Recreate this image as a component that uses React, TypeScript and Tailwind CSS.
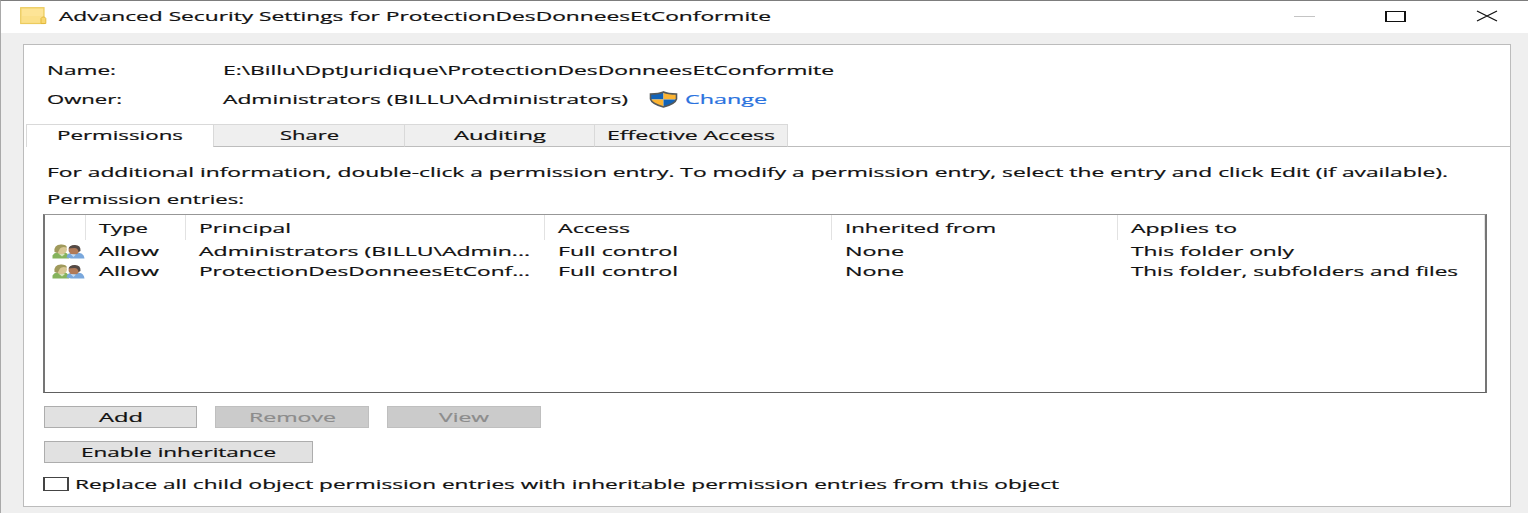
import { useLayoutEffect, useRef } from "react";

/** Single line of text stretched horizontally to fill the width of its box. */
function Wide({ children, className }: { children: string; className: string }) {
  const box = useRef<HTMLSpanElement>(null);
  const text = useRef<HTMLSpanElement>(null);
  useLayoutEffect(() => {
    if (!box.current || !text.current) return;
    const ratio = box.current.offsetWidth / text.current.getBoundingClientRect().width;
    text.current.style.transform = `scaleX(${ratio})`;
  }, []);
  return (
    <span ref={box} className={`block h-[18px] shrink-0 text-left leading-[18px] whitespace-nowrap ${className}`}>
      <span ref={text} className="inline-block origin-left [-webkit-text-stroke:0.2px_currentColor]">
        {children}
      </span>
    </span>
  );
}

function FolderIcon() {
  return (
    <svg className="block h-[18px] w-[27px]" viewBox="0 0 27 18">
      <rect x="0.7" y="0.7" width="23.3" height="15.8" fill="#fbe08a" stroke="#eccb5e" strokeWidth="1.2" />
      <path d="M2 2H23V9H2Z" fill="#fde496" />
      <path d="M21 16.5V11.500L22.500 10H24.500L25.800 11.500V16.500Z" fill="#f8d76e" stroke="#e3b93c" strokeWidth="1" />
    </svg>
  );
}

function ShieldIcon() {
  return (
    <svg className="block h-[17px] w-[29px]" viewBox="0 0 29 17">
      <defs>
        <clipPath id="shield">
          <path d="M14.500 1C11 2.600 6.500 3 1.500 3V8C2.500 12 9 14.500 14.500 16C20 14.500 26.500 12 27.500 8V3C22.500 3 18 2.600 14.500 1Z" />
        </clipPath>
      </defs>
      <g clipPath="url(#shield)">
        <rect width="14.500" height="8.500" fill="#1263b8" />
        <rect x="14.500" width="14.500" height="8.500" fill="#fcb432" />
        <rect y="8.500" width="14.500" height="8.500" fill="#fcb432" />
        <rect x="14.500" y="8.500" width="14.500" height="8.500" fill="#1263b8" />
      </g>
      <path
        d="M14.500 1C11 2.600 6.500 3 1.500 3V8C2.500 12 9 14.500 14.500 16C20 14.500 26.500 12 27.500 8V3C22.500 3 18 2.600 14.500 1Z"
        fill="none"
        stroke="#55595a"
        strokeWidth="1.600"
      />
    </svg>
  );
}

function UsersIcon() {
  return (
    <svg className="block h-[15px] w-[33px]" viewBox="0 0 33 15">
      <path d="M0.500 14.500V11.500Q1.500 9 5 8.500H13Q16.500 9 17 14.500Z" fill="#86b35c" />
      <ellipse cx="9.500" cy="5.500" rx="5.500" ry="4.800" fill="#d8c795" />
      <path d="M2.500 8Q1.500 0.500 9 0.500Q14.500 0.500 15 3.500Q10 2 8 4.500L5.500 9Z" fill="#a09a5c" />
      <path d="M7 10L10 12.500L13 10Z" fill="#d5e3bd" />
      <path d="M14.500 13.500Q15 9.500 19 8.800H27Q32 9.500 32.500 14.500H19Z" fill="#79a7dc" />
      <ellipse cx="22" cy="6" rx="5.500" ry="4.500" fill="#b07a58" />
      <path d="M16.500 4.500Q17.500 0.900 23 1Q29 1 28.500 7L26.500 8Q26 4 22.500 4Q19 4.300 16.500 4.500Z" fill="#544a45" />
      <path d="M18.500 10L21.500 13L24 10.500Z" fill="#c4daf1" />
    </svg>
  );
}

const cols = "grid grid-cols-[41px_100px_359px_287px_286px_1fr]";

function Row({ principal, applies, appliesWidth }: { principal: string; applies: string; appliesWidth: string }) {
  return (
    <div className={`${cols} h-5 items-center`}>
      <div className="pl-[7px]">
        <UsersIcon />
      </div>
      <div className="pl-[13px]"><Wide className="w-[60px]">Allow</Wide></div>
      <div className="pl-[13px]"><Wide className="w-[331px]">{principal}</Wide></div>
      <div className="pl-[13px]"><Wide className="w-[120px]">Full control</Wide></div>
      <div className="pl-[13px]"><Wide className="w-[59px]">None</Wide></div>
      <div className="pl-[13px]"><Wide className={appliesWidth}>{applies}</Wide></div>
    </div>
  );
}

export default function App() {
  return (
    <div className="flex h-[513px] w-[1528px] flex-col overflow-hidden border-t border-l border-t-[#7d7d7d] border-l-[#a9a9a9] bg-[#efefef] font-['Open_Sans','Noto_Sans',sans-serif] text-[13px] text-[#111]">
      <header className="flex h-8 shrink-0 items-center bg-white pb-[2px] pl-[19px]">
        <FolderIcon />
        <Wide className="ml-[12px] w-[712px]">Advanced Security Settings for ProtectionDesDonneesEtConformite</Wide>
        <div className="ml-auto flex items-center gap-[70px] pr-[30px]">
          <div className="h-px w-[21px] bg-[#c4c4c4]" />
          <div className="h-[11px] w-[21px] border-x-2 border-y border-[#111]" />
          <svg className="block h-[12px] w-[22px]" viewBox="0 0 22 12">
            <path d="M1 1L21 11M21 1L1 11" stroke="#111" strokeWidth="1.300" fill="none" />
          </svg>
        </div>
      </header>

      <main className="mt-[11px] ml-[22px] flex h-[463px] w-[1488px] shrink-0 flex-col border border-[#bcbcbc] bg-white">
        <div className="mt-[16px] flex pl-[23px]">
          <div className="w-[176px]"><Wide className="w-[69px]">Name:</Wide></div>
          <Wide className="w-[611px]">E:\Billu\DptJuridique\ProtectionDesDonneesEtConformite</Wide>
        </div>
        <div className="mt-[11px] flex items-center pl-[23px]">
          <div className="w-[176px]"><Wide className="w-[75px]">Owner:</Wide></div>
          <Wide className="w-[405px]">Administrators (BILLU\Administrators)</Wide>
          <div className="ml-[21px]"><ShieldIcon /></div>
          <Wide className="ml-[7px] w-[82px] text-[#2a72de]">Change</Wide>
        </div>

        <nav className="mt-[16px] flex h-[23px] shrink-0 pl-[2px]">
          <button className="flex w-[187px] border-t border-l border-[#d9d9d9] bg-white pt-[1px] pl-[30px]">
            <Wide className="w-[126px]">Permissions</Wide>
          </button>
          <button className="flex w-[191px] justify-center border border-r-0 border-[#d9d9d9] border-b-[#bdbdbd] bg-[#efefef] pt-[1px]">
            <Wide className="w-[59px]">Share</Wide>
          </button>
          <button className="flex w-[190px] justify-center border border-r-0 border-[#d9d9d9] border-b-[#bdbdbd] bg-[#efefef] pt-[1px]">
            <Wide className="w-[92px]">Auditing</Wide>
          </button>
          <button className="flex w-[194px] justify-center border border-[#d9d9d9] border-b-[#bdbdbd] bg-[#efefef] pt-[1px]">
            <Wide className="w-[168px]">Effective Access</Wide>
          </button>
          <div className="flex-1 border-b border-[#bdbdbd]" />
        </nav>

        <div className="mt-[16px] pl-[23px]">
          <Wide className="w-[1401px]">
            For additional information, double-click a permission entry. To modify a permission entry, select the entry and click Edit (if available).
          </Wide>
          <Wide className="mt-[9px] w-[197px]">Permission entries:</Wide>
        </div>

        <section className="mt-[6px] ml-[19px] h-[179px] w-[1444px] shrink-0 border-x-2 border-y border-x-[#757575] border-t-[#979797] border-b-[#606060]">
          <div className={`${cols} mb-[1px] h-[25px] *:border-r *:border-[#e2e2e2] *:pt-[4px]`}>
            <div />
            <div className="pl-[13px]"><Wide className="w-[49px]">Type</Wide></div>
            <div className="pl-[13px]"><Wide className="w-[92px]">Principal</Wide></div>
            <div className="pl-[13px]"><Wide className="w-[72px]">Access</Wide></div>
            <div className="pl-[13px]"><Wide className="w-[151px]">Inherited from</Wide></div>
            <div className="pl-[13px]"><Wide className="w-[106px]">Applies to</Wide></div>
          </div>
          <Row principal="Administrators (BILLU\Admin..." applies="This folder only" appliesWidth="w-[163px]" />
          <Row principal="ProtectionDesDonneesEtConf..." applies="This folder, subfolders and files" appliesWidth="w-[327px]" />
        </section>

        <div className="mt-[13px] ml-[20px] flex gap-[18px]">
          <button className="flex h-[22px] w-[153px] items-center justify-center border border-[#adadad] bg-[#e1e1e1]">
            <Wide className="w-[44px]">Add</Wide>
          </button>
          <button disabled className="flex h-[22px] w-[154px] items-center justify-center border border-[#bfbfbf] bg-[#cbcbcb] text-[#8c8c8c]">
            <Wide className="w-[87px]">Remove</Wide>
          </button>
          <button disabled className="flex h-[22px] w-[154px] items-center justify-center border border-[#bfbfbf] bg-[#cbcbcb] text-[#8c8c8c]">
            <Wide className="w-[50px]">View</Wide>
          </button>
        </div>
        <button className="mt-[13px] ml-[20px] flex h-[22px] w-[269px] shrink-0 items-center justify-center border border-[#adadad] bg-[#e1e1e1]">
          <Wide className="w-[195px]">Enable inheritance</Wide>
        </button>
        <label className="mt-[12px] ml-[19px] flex items-center">
          <span className="h-[14px] w-[26px] border-x-2 border-y border-[#444] bg-white" />
          <Wide className="ml-[6px] w-[984px]">Replace all child object permission entries with inheritable permission entries from this object</Wide>
        </label>
      </main>
    </div>
  );
}
